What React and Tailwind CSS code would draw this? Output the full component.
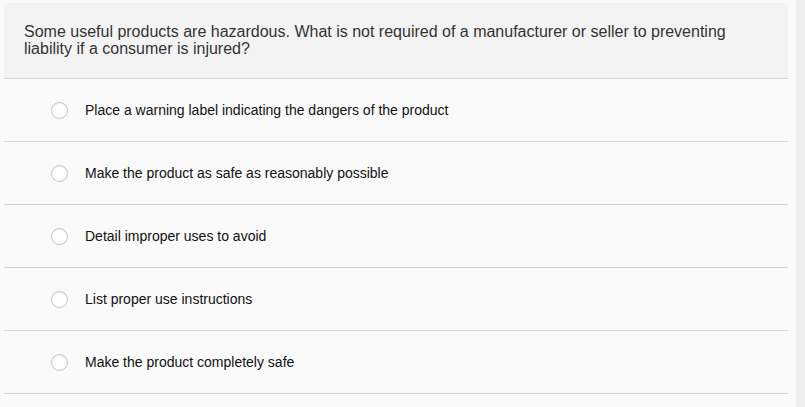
export default function App() {
  const options = [
    "Place a warning label indicating the dangers of the product",
    "Make the product as safe as reasonably possible",
    "Detail improper uses to avoid",
    "List proper use instructions",
    "Make the product completely safe",
  ];
  return (
    <div
      className="flex h-[407px] w-[805px] overflow-hidden bg-[#fafafa]"
      style={{ fontFamily: '"Liberation Sans", Arial, sans-serif' }}
    >
      <div className="w-[796px] pl-[4px] pr-[8px] pt-[3px]">
        <div className="h-[76px] border-b border-[#d3d3d3] bg-[#f3f3f3] pl-[20px] pt-[20px] text-[16px] leading-[17px] text-[#333333]">
          <p className="w-[715px]">
            Some useful products are hazardous. What is not required of a manufacturer or seller to preventing liability if a consumer is injured?
          </p>
        </div>
        {options.map((o) => (
          <div
            key={o}
            className="flex h-[63px] items-center border-b border-[#d3d3d3] pl-[47px]"
          >
            <span className="h-[17px] w-[17px] shrink-0 rounded-full border border-[#c4c4c4] bg-white shadow-[inset_0_1px_1px_rgba(0,0,0,0.08)]" />
            <span className="ml-[17px] text-[14px] text-[#111111]">{o}</span>
          </div>
        ))}
      </div>
      <div className="w-[9px] bg-[#ededed]" />
    </div>
  );
}
